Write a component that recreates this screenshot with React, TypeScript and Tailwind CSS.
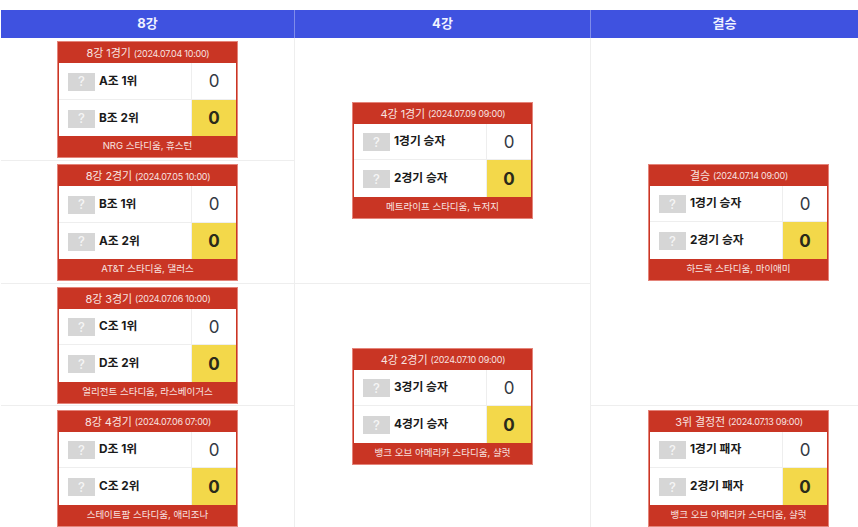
const font = "font-['Inter','Noto_Sans_CJK_KR',sans-serif]";

type Match = {
  title: string;
  date: string;
  home: string;
  away: string;
  venue: string;
};

function MatchCard({ match }: { match: Match }) {
  return (
    <div className="mt-px w-[181px] border border-[#e4847a] bg-[#c93524] text-white">
      <div className="flex h-[21px] items-center justify-center gap-[3px] pt-[2px] pl-px text-[11px] tracking-[-0.1px] text-[#f8e3e0]">
        <span>{match.title}</span>
        <span className="text-[9px] tracking-[-0.25px]">({match.date})</span>
      </div>
      <div className="mx-px bg-white">
        <TeamRow name={match.home} />
        <TeamRow name={match.away} winner />
      </div>
      <div className="flex h-[21px] items-center justify-center text-[9.5px] text-[#f8e3e0]">{match.venue}</div>
    </div>
  );
}

function TeamRow({ name, winner }: { name: string; winner?: boolean }) {
  return (
    <div className={`flex h-[36.5px] ${winner ? "" : "border-b border-[#eeeeee]"}`}>
      <div className="flex flex-1 items-center border-r border-[#eeeeee] pt-[2px] pl-[9px]">
        <div className="flex h-[18px] w-[27px] items-center justify-center bg-[#d6d6d6] text-[13px] font-medium text-[#f5f5f5]">?</div>
        <span className="ml-[4px] text-[11.8px] font-bold text-[#1a1a1a]">{name}</span>
      </div>
      {winner ? (
        <div className="flex w-[44px] items-center justify-center bg-[#f3d84a] pt-[2px] text-[17px] font-bold text-[#2a2a1a]">0</div>
      ) : (
        <div className="flex w-[44px] items-center justify-center pt-[2px] text-[17px] text-[#333a44]">0</div>
      )}
    </div>
  );
}

const quarter: Match[] = [
  { title: "8강 1경기", date: "2024.07.04 10:00", home: "A조 1위", away: "B조 2위", venue: "NRG 스타디움, 휴스턴" },
  { title: "8강 2경기", date: "2024.07.05 10:00", home: "B조 1위", away: "A조 2위", venue: "AT&T 스타디움, 댈러스" },
  { title: "8강 3경기", date: "2024.07.06 10:00", home: "C조 1위", away: "D조 2위", venue: "얼리전트 스타디움, 라스베이거스" },
  { title: "8강 4경기", date: "2024.07.06 07:00", home: "D조 1위", away: "C조 2위", venue: "스테이트팜 스타디움, 애리조나" },
];

const semi: Match[] = [
  { title: "4강 1경기", date: "2024.07.09 09:00", home: "1경기 승자", away: "2경기 승자", venue: "메트라이프 스타디움, 뉴저지" },
  { title: "4강 2경기", date: "2024.07.10 09:00", home: "3경기 승자", away: "4경기 승자", venue: "뱅크 오브 아메리카 스타디움, 샬럿" },
];

const final: Match = { title: "결승", date: "2024.07.14 09:00", home: "1경기 승자", away: "2경기 승자", venue: "하드록 스타디움, 마이애미" };
const third: Match = { title: "3위 결정전", date: "2024.07.13 09:00", home: "1경기 패자", away: "2경기 패자", venue: "뱅크 오브 아메리카 스타디움, 샬럿" };

export default function App() {
  return (
    <div className={`h-[527px] w-[858px] overflow-hidden bg-white pt-[10px] pl-px ${font}`}>
      <div className="grid h-[28px] grid-cols-[294px_296px_1fr] bg-[#3f52e0] text-[13px] font-bold text-[#f0f2ff]">
        <div className="flex items-center justify-center border-r border-[#7f8cea]">8강</div>
        <div className="flex items-center justify-center border-r border-[#7f8cea]">4강</div>
        <div className="flex items-center justify-center">결승</div>
      </div>
      <div className="grid grid-cols-[294px_296px_1fr] grid-rows-[123px_123px_122px_123px]">
        <div className="col-start-1 row-start-1 flex items-center justify-center border-r border-b border-[#eeeeee]">
          <MatchCard match={quarter[0]} />
        </div>
        <div className="col-start-1 row-start-2 flex items-center justify-center border-r border-b border-[#eeeeee]">
          <MatchCard match={quarter[1]} />
        </div>
        <div className="col-start-1 row-start-3 flex items-center justify-center border-r border-b border-[#eeeeee]">
          <MatchCard match={quarter[2]} />
        </div>
        <div className="col-start-1 row-start-4 flex items-center justify-center border-r border-[#eeeeee]">
          <MatchCard match={quarter[3]} />
        </div>
        <div className="col-start-2 row-span-2 row-start-1 flex items-center justify-center border-r border-b border-[#eeeeee] pb-[2px]">
          <MatchCard match={semi[0]} />
        </div>
        <div className="col-start-2 row-span-2 row-start-3 flex items-center justify-center border-r border-[#eeeeee] pb-[2px]">
          <MatchCard match={semi[1]} />
        </div>
        <div className="col-start-3 row-span-3 row-start-1 flex items-center justify-center border-b border-[#eeeeee] pl-[28px]">
          <MatchCard match={final} />
        </div>
        <div className="col-start-3 row-start-4 flex items-center justify-center pl-[28px]">
          <MatchCard match={third} />
        </div>
      </div>
    </div>
  );
}
